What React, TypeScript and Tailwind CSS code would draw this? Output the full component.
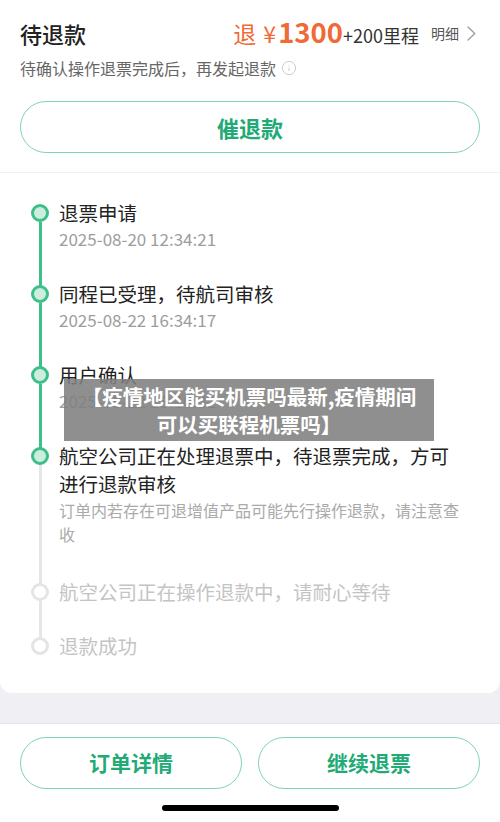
import React from "react";
import { Info } from "lucide-react";

const FONT = { fontFamily: '"Noto Sans CJK SC", "Noto Sans", sans-serif' };

type Step = {
  title: string;
  time?: string;
  desc?: string;
  done: boolean;
  lineAfter: "green" | "gray" | "none";
  pb: string;
};

const steps: Step[] = [
  { title: "退票申请", time: "2025-08-20 12:34:21", done: true, lineAfter: "green", pb: "pb-[29px]" },
  { title: "同程已受理，待航司审核", time: "2025-08-22 16:34:17", done: true, lineAfter: "green", pb: "pb-[29px]" },
  { title: "用户确认", time: "2025-08-22 18:10:32", done: true, lineAfter: "green", pb: "pb-[29px]" },
  {
    title: "航空公司正在处理退票中，待退票完成，方可进行退款审核",
    desc: "订单内若存在可退增值产品可能先行操作退款，请注意查收",
    done: true,
    lineAfter: "gray",
    pb: "pb-[32px]",
  },
  { title: "航空公司正在操作退款中，请耐心等待", done: false, lineAfter: "gray", pb: "pb-[26px]" },
  { title: "退款成功", done: false, lineAfter: "none", pb: "pb-0" },
];

function StepRow({ s, first }: { s: Step; first: boolean }) {
  return (
    <div className="flex">
      <div className="relative w-[18px] shrink-0 flex flex-col items-center">
        {!first && (
          <div
            className={
              "absolute top-0 h-[14px] w-[3px] " +
              (s.done ? "bg-[#3dbf8a]" : "bg-[#e6e6e6]")
            }
          />
        )}
        <div
          className={
            "relative z-10 mt-[5px] h-[18px] w-[18px] rounded-full border-[3px] " +
            (s.done ? "border-[#3dbf8a] bg-[#cdeedf]" : "border-[#e4e4e4] bg-white")
          }
        />
        {s.lineAfter !== "none" && (
          <div
            className={
              "w-[3px] flex-1 " +
              (s.lineAfter === "green" ? "bg-[#3dbf8a]" : "bg-[#e6e6e6]")
            }
          />
        )}
      </div>
      <div className={"ml-[10px] w-[402px] " + s.pb}>
        <div
          className={
            "text-[19.5px] leading-[28px] " +
            (s.done ? "text-[#222222]" : "text-[#c4c4c4]")
          }
        >
          {s.title}
        </div>
        {s.time && (
          <div className="text-[17px] leading-[24px] text-[#9d9d9d]">{s.time}</div>
        )}
        {s.desc && (
          <div className="text-[16px] leading-[24px] text-[#aaaaaa]">{s.desc}</div>
        )}
      </div>
    </div>
  );
}

export default function App() {
  return (
    <div className="w-[500px] h-[822px] bg-[#f0f0f4] flex flex-col overflow-hidden" style={FONT}>
      <div className="bg-white rounded-b-[12px]">
        {/* Header section */}
        <div className="px-[20px] pt-[11px] pb-[19px] border-b border-[#f0f0f0]">
          <div className="flex items-center justify-between h-[44px]">
            <div className="text-[22px] text-[#222222] font-medium">待退款</div>
            <div className="flex items-center mr-[4px]">
              <div className="flex items-baseline">
                <span className="text-[23px] text-[#ef6a36]">退</span>
                <span className="ml-[7px] text-[23px] text-[#ef6a36]">¥</span>
                <span className="ml-[2px] text-[27.5px] font-bold text-[#ef6a36] leading-none">1300</span>
                <span className="text-[18px] text-[#333333]">+200里程</span>
              </div>
              <span className="ml-[12px] text-[14px] text-[#555555]">明细</span>
              <svg width="9" height="15" viewBox="0 0 9 15" className="ml-[8px]" fill="none">
                <path d="M1 1 L7.8 7.5 L1 14" stroke="#a0a0a0" strokeWidth="1.4" strokeLinecap="round" strokeLinejoin="round" />
              </svg>
            </div>
          </div>
          <div className="mt-[2px] flex items-center h-[22px] text-[16px] text-[#666666]">
            <span>待确认操作退票完成后，再发起退款</span>
            <Info size={16} strokeWidth={1.4} className="ml-[5px] text-[#c8c8c8]" />
          </div>
          <div className="mt-[22px] h-[52px] rounded-full border border-[#7fd4b3] flex items-center justify-center text-[22px] font-bold text-[#22aa76]">
            催退款
          </div>
        </div>

        {/* Timeline */}
        <div className="relative pl-[31px] pt-[26px] pb-[33px]">
          {steps.map((s, i) => (
            <StepRow key={i} s={s} first={i === 0} />
          ))}

          <div className="absolute left-[64px] top-[206px] w-[370px] h-[62px] bg-[rgba(128,128,128,0.88)] flex flex-col items-center justify-center text-white font-bold text-[20.5px] leading-[28px]">
            <span className="whitespace-nowrap">【疫情地区能买机票吗最新,疫情期间</span>
            <span className="whitespace-nowrap">可以买联程机票吗】</span>
          </div>
        </div>
      </div>

      <div className="h-[30px] shrink-0" />

      {/* Bottom bar */}
      <div className="flex-1 bg-white border-t border-[#e3e3e8] px-[20px] pt-[13px]">
        <div className="flex gap-[16px]">
          <div className="flex-1 h-[52px] rounded-full border border-[#7fd4b3] flex items-center justify-center text-[21px] font-bold text-[#22aa76]">
            订单详情
          </div>
          <div className="flex-1 h-[52px] rounded-full border border-[#7fd4b3] flex items-center justify-center text-[21px] font-bold text-[#22aa76]">
            继续退票
          </div>
        </div>
        <div className="mt-[16px] mx-auto w-[177px] h-[6px] rounded-full bg-black" />
      </div>
    </div>
  );
}
